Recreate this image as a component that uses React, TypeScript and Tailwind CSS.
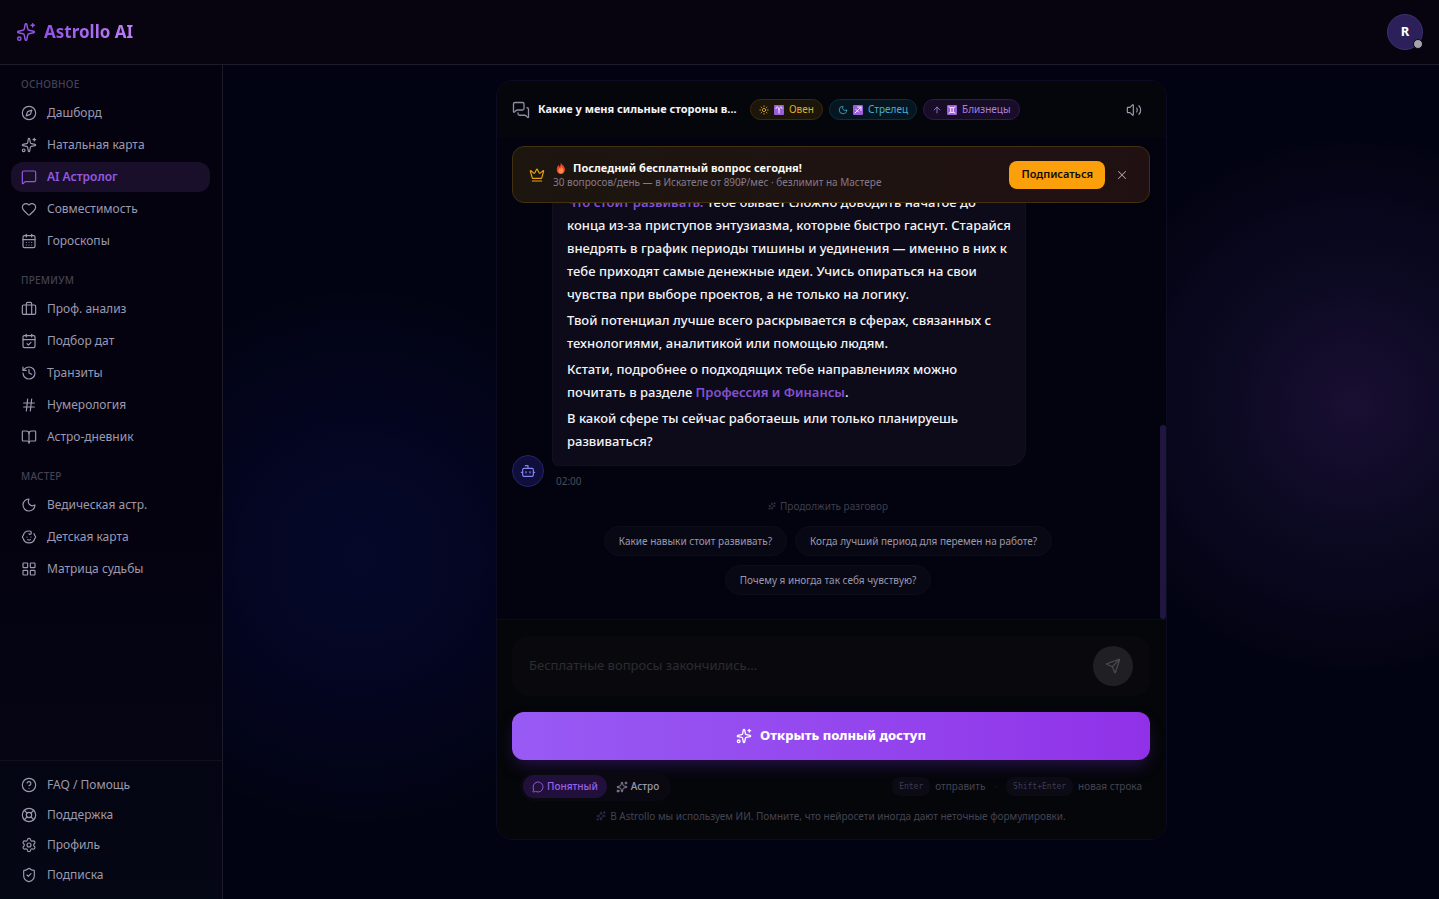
import React from "react";
import {
  ArrowUp,
  Baby,
  BookOpen,
  Bot,
  Briefcase,
  CalendarCheck,
  CalendarDays,
  CircleHelp,
  Compass,
  Crown,
  Hash,
  Heart,
  History,
  LayoutGrid,
  LifeBuoy,
  MessageCircle,
  MessageSquare,
  MessagesSquare,
  Moon,
  Send,
  Settings,
  ShieldCheck,
  Sparkles,
  Sun,
  Volume2,
  X,
  type LucideIcon,
} from "lucide-react";

type NavEntry = { label: string; icon: LucideIcon; active?: boolean };

const sections: { title: string; items: NavEntry[] }[] = [
  {
    title: "Основное",
    items: [
      { label: "Дашборд", icon: Compass },
      { label: "Натальная карта", icon: Sparkles },
      { label: "AI Астролог", icon: MessageSquare, active: true },
      { label: "Совместимость", icon: Heart },
      { label: "Гороскопы", icon: CalendarDays },
    ],
  },
  {
    title: "Премиум",
    items: [
      { label: "Проф. анализ", icon: Briefcase },
      { label: "Подбор дат", icon: CalendarCheck },
      { label: "Транзиты", icon: History },
      { label: "Нумерология", icon: Hash },
      { label: "Астро-дневник", icon: BookOpen },
    ],
  },
  {
    title: "Мастер",
    items: [
      { label: "Ведическая астр.", icon: Moon },
      { label: "Детская карта", icon: Baby },
      { label: "Матрица судьбы", icon: LayoutGrid },
    ],
  },
];

const footerLinks: NavEntry[] = [
  { label: "FAQ / Помощь", icon: CircleHelp },
  { label: "Поддержка", icon: LifeBuoy },
  { label: "Профиль", icon: Settings },
  { label: "Подписка", icon: ShieldCheck },
];

const suggestions = [
  "Какие навыки стоит развивать?",
  "Когда лучший период для перемен на работе?",
  "Почему я иногда так себя чувствую?",
];

function NavLink({ item }: { item: NavEntry }) {
  const Icon = item.icon;
  return (
    <a
      href="#"
      className={
        item.active
          ? "flex h-[30px] items-center gap-2.5 rounded-xl bg-[#190f2b] px-2.5 text-xs font-semibold text-[#9259e0]"
          : "flex h-[30px] items-center gap-2.5 rounded-xl px-2.5 text-xs text-[#9c9aae]"
      }
    >
      <Icon className="size-4 shrink-0" strokeWidth={1.75} />
      <span>{item.label}</span>
    </a>
  );
}

function ZodiacTile({ sign }: { sign: "aries" | "sagittarius" | "gemini" }) {
  return (
    <svg viewBox="0 0 20 20" className="size-2.5" fill="none" stroke="#f6edff" strokeWidth={2} strokeLinecap="round">
      <rect width="20" height="20" rx="2" fill="#9a5fd6" stroke="none" />
      {sign === "aries" && <path d="M4 7c0-5 5-4 6 2v7M16 7c0-5-5-4-6 2" />}
      {sign === "sagittarius" && <path d="M4 16 16 4M9 4h7v7M6 9l5 5" />}
      {sign === "gemini" && <path d="M4 4c4 2 8 2 12 0M4 16c4-2 8-2 12 0M7.500 5.500v9M12.500 5.500v9" />}
    </svg>
  );
}

function Flame() {
  return (
    <svg viewBox="0 0 24 24" className="mx-0.5 size-3 shrink-0">
      <path d="M11 0c1 5 9 7 9 15 0 5-3.500 9-8 9s-8.500-3-8.500-9c0-4 2-6 3-9 1.500 1 2 2 2 4C11 8 12 4 11 0Z" fill="#e5432d" />
      <path d="M12 8c.5 3 5 4.500 5 9 0 3.500-2 6-5 6s-5.500-2-5.500-5.500C6.500 15 8 14 8.500 12c1 .6 1.500 1.300 1.600 2.300C11.500 13 12.300 11 12 8Z" fill="#ff8b3d" />
    </svg>
  );
}

export default function App() {
  return (
    <div className="flex h-screen flex-col overflow-hidden bg-[#020312] bg-[radial-gradient(circle_at_94%_45%,#190f32_0px,#0c0922_130px,transparent_270px),radial-gradient(circle_at_25%_62%,#050829_0px,#040623_110px,transparent_270px)] font-['Noto_Sans','Segoe_UI',sans-serif] text-white">
      <header className="flex h-[65px] shrink-0 items-center justify-between border-b border-[#1d1b27] bg-[#070410] px-4">
        <a href="#" className="flex items-center gap-2">
          <Sparkles className="size-5 text-[#9656e4]" strokeWidth={1.75} />
          <span className="bg-linear-to-r from-[#9352e6] to-[#bd7ff5] bg-clip-text text-[17px] font-bold text-transparent">
            Astrollo AI
          </span>
        </a>
        <button
          type="button"
          aria-label="R"
          className="relative flex size-9 items-center justify-center rounded-full border border-[#3c3270] bg-[#2b2059] text-[13px] font-bold"
        >
          R
          <span className="absolute -right-px bottom-0 size-2.5 rounded-full border border-[#08060f] bg-[#a4a3ac]" />
        </button>
      </header>

      <div className="flex min-h-0 flex-1">
        <aside className="flex w-[223px] shrink-0 flex-col justify-between border-r border-[#1d1b2b] bg-linear-to-b from-[#050210] via-[#050210] to-[#040714]">
          <nav className="flex flex-col gap-4 pt-[11px] pr-3 pl-[11px]">
            {sections.map((s) => (
              <section key={s.title}>
                <h2 className="mb-1.5 px-2.5 text-[10px] leading-4 font-medium tracking-wide text-[#444152] uppercase">
                  {s.title}
                </h2>
                <ul className="flex flex-col gap-0.5">
                  {s.items.map((i) => (
                    <li key={i.label}>
                      <NavLink item={i} />
                    </li>
                  ))}
                </ul>
              </section>
            ))}
          </nav>
          <nav className="border-t border-[#10101b] py-[9px] pr-3 pl-[11px]">
            {footerLinks.map((i) => (
              <NavLink key={i.label} item={i} />
            ))}
          </nav>
        </aside>

        <main className="flex min-w-0 flex-1 justify-center pt-[15px] pb-[59px] pl-px">
          <section className="flex w-full max-w-[671px] flex-col overflow-hidden rounded-2xl border border-[#0b0b22] bg-[#02030e]">
            <div className="flex h-[57px] shrink-0 items-center gap-2 bg-[#05060c] px-[15px]">
              <MessagesSquare className="size-[18px] shrink-0 text-[#8f8da3]" strokeWidth={1.75} />
              <h1 className="w-[200px] text-[11px] font-bold whitespace-nowrap text-[#f4f4f8]">
                Какие у меня сильные стороны в...
              </h1>
              <ul className="ml-1 flex gap-1.5 text-[10px]">
                <li className="flex h-[21px] items-center gap-[5px] rounded-full border border-[#3a2c0c] bg-[#1c150a] px-2 text-[#deae2c]">
                  <Sun className="size-2.5" />
                  <ZodiacTile sign="aries" />
                  Овен
                </li>
                <li className="flex h-[21px] items-center gap-[5px] rounded-full border border-[#0c303d] bg-[#051620] px-2 text-[#4aadcf]">
                  <Moon className="size-2.5" />
                  <ZodiacTile sign="sagittarius" />
                  Стрелец
                </li>
                <li className="flex h-[21px] items-center gap-[5px] rounded-full border border-[#321b4d] bg-[#180d29] px-2 text-[#a981dc]">
                  <ArrowUp className="size-2.5" />
                  <ZodiacTile sign="gemini" />
                  Близнецы
                </li>
              </ul>
              <button type="button" aria-label="Звук" className="mr-[9px] ml-auto text-[#9d9bad]">
                <Volume2 className="size-4" strokeWidth={1.75} />
              </button>
            </div>

            <div className="relative flex min-h-0 flex-1 flex-col justify-end overflow-hidden pr-[22px] pb-6 pl-[15px]">
              <div className="flex items-end gap-2">
                <span className="flex size-8 shrink-0 items-center justify-center rounded-full border border-[#24246a] bg-[#100f3c] text-[#8583ee]">
                  <Bot className="size-4" strokeWidth={1.75} />
                </span>
                <div className="w-3/4">
                  <div className="flex flex-col gap-[3px] rounded-2xl rounded-bl-md border border-[#11101c] bg-[#0d0b19] px-3.5 py-3 text-[13px] leading-[23px] font-medium text-[#f3f3f7]">
                    <p>
                      <strong className="font-semibold text-[#8450cf]">Что стоит развивать:</strong> Тебе бывает сложно
                      доводить начатое до конца из-за приступов энтузиазма, которые быстро гаснут. Старайся внедрять в
                      график периоды тишины и уединения — именно в них к тебе приходят самые денежные идеи. Учись
                      опираться на свои чувства при выборе проектов, а не только на логику.
                    </p>
                    <p>
                      Твой потенциал лучше всего раскрывается в сферах, связанных с технологиями, аналитикой или
                      помощью людям.
                    </p>
                    <p>
                      Кстати, подробнее о подходящих тебе направлениях можно почитать в разделе{" "}
                      <a href="#" className="font-semibold text-[#8450cf]">
                        Профессия и Финансы
                      </a>
                      .
                    </p>
                    <p>В какой сфере ты сейчас работаешь или только планируешь развиваться?</p>
                  </div>
                  <time className="mt-[9px] block pl-1 text-[10px] leading-3 text-[#4b4a5b]">02:00</time>
                </div>
              </div>
              <p className="mt-[11px] flex items-center justify-center gap-1 text-[10px] leading-4 text-[#3f3e4d]">
                <Sparkles className="size-2" />
                Продолжить разговор
              </p>
              <div className="mt-3 flex flex-wrap justify-center gap-x-2 gap-y-[9px]">
                {suggestions.map((s) => (
                  <button
                    key={s}
                    type="button"
                    className="h-[30px] rounded-full border border-[#0d0c18] bg-[#080814] px-3.5 text-[10px] text-[#9a98ab]"
                  >
                    {s}
                  </button>
                ))}
              </div>

              <div className="absolute top-2 right-4 left-[15px] flex h-[57px] items-center rounded-xl border border-[#42300f] bg-linear-to-r from-[#1c160f] to-[#201012] px-4">
                <Crown className="size-4 shrink-0 text-[#e9a312]" strokeWidth={1.75} />
                <div className="ml-2 min-w-0 flex-1">
                  <p className="flex items-center gap-1 text-[11px] leading-4 font-bold text-[#fbf8f4]">
                    <Flame />
                    Последний бесплатный вопрос сегодня!
                  </p>
                  <p className="text-[10px] leading-[13px] text-[#85798a]">
                    30 вопросов/день — в Искателе от 890₽/мес · безлимит на Мастере
                  </p>
                </div>
                <button
                  type="button"
                  className="h-7 rounded-lg bg-[#fb9f0b] px-3 text-[11px] font-semibold text-[#120b02]"
                >
                  Подписаться
                </button>
                <button type="button" aria-label="Закрыть" className="mr-1 ml-2.5 text-[#aaa2a8]">
                  <X className="size-3.5" strokeWidth={1.75} />
                </button>
              </div>
              <span className="absolute right-0 bottom-0 h-[194px] w-1.5 rounded-full bg-[#201640]" />
            </div>

            <div className="shrink-0 border-t border-[#0a0a1a] bg-[#05060a] pt-4 pr-4 pb-[15px] pl-[15px]">
              <div className="flex h-[60px] items-center rounded-2xl bg-[#09090d] px-[17px]">
                <input
                  type="text"
                  disabled
                  aria-label="Вопрос астрологу"
                  placeholder="Бесплатные вопросы закончились..."
                  className="min-w-0 flex-1 bg-transparent text-[13px] placeholder:text-[#2c2c32]"
                />
                <button
                  type="button"
                  disabled
                  aria-label="Отправить"
                  className="flex size-10 items-center justify-center rounded-full bg-[#202024] text-[#4b4b52]"
                >
                  <Send className="size-4" strokeWidth={1.75} />
                </button>
              </div>
              <button
                type="button"
                className="mt-4 flex h-12 w-full items-center justify-center gap-2 rounded-xl bg-linear-to-r from-[#985af4] to-[#9031e8] text-[13px] font-extrabold shadow-[0_8px_16px_-4px_#2a1350]"
              >
                <Sparkles className="size-4" strokeWidth={2} />
                Открыть полный доступ
              </button>
              <div className="mt-3 flex items-center justify-between px-2">
                <div className="flex h-[29px] items-center rounded-full bg-[#0a0811] px-[3px] text-[10px] font-medium">
                  <button
                    type="button"
                    className="flex h-[23px] items-center gap-[3px] rounded-full bg-[#22103c] px-[9px] text-[#9a62e4]"
                  >
                    <MessageCircle className="size-3" strokeWidth={1.75} />
                    Понятный
                  </button>
                  <button
                    type="button"
                    className="flex h-[23px] items-center gap-[3px] rounded-full px-[9px] text-[#9b99ab]"
                  >
                    <Sparkles className="size-3" strokeWidth={1.75} />
                    Астро
                  </button>
                </div>
                <div className="flex items-center gap-[5px] text-[10px] text-[#444352]">
                  <kbd className="flex h-[19px] items-center rounded-lg bg-[#0b0a15] px-[7px] font-['DejaVu_Sans_Mono',monospace] text-[8px] text-[#3d3c52]">
                    Enter
                  </kbd>
                  <span>отправить</span>
                  <span className="px-1 text-[#1c1c26]">·</span>
                  <kbd className="flex h-[19px] items-center rounded-lg bg-[#0b0a15] px-[7px] font-['DejaVu_Sans_Mono',monospace] text-[8px] text-[#3d3c52]">
                    Shift+Enter
                  </kbd>
                  <span>новая строка</span>
                </div>
              </div>
              <p className="mt-[7px] flex items-center justify-center gap-1 text-[10px] leading-4 text-[#444352]">
                <Sparkles className="size-2.5 text-[#39305f]" />
                В Astrollo мы используем ИИ. Помните, что нейросети иногда дают неточные формулировки.
              </p>
            </div>
          </section>
        </main>
      </div>
    </div>
  );
}
